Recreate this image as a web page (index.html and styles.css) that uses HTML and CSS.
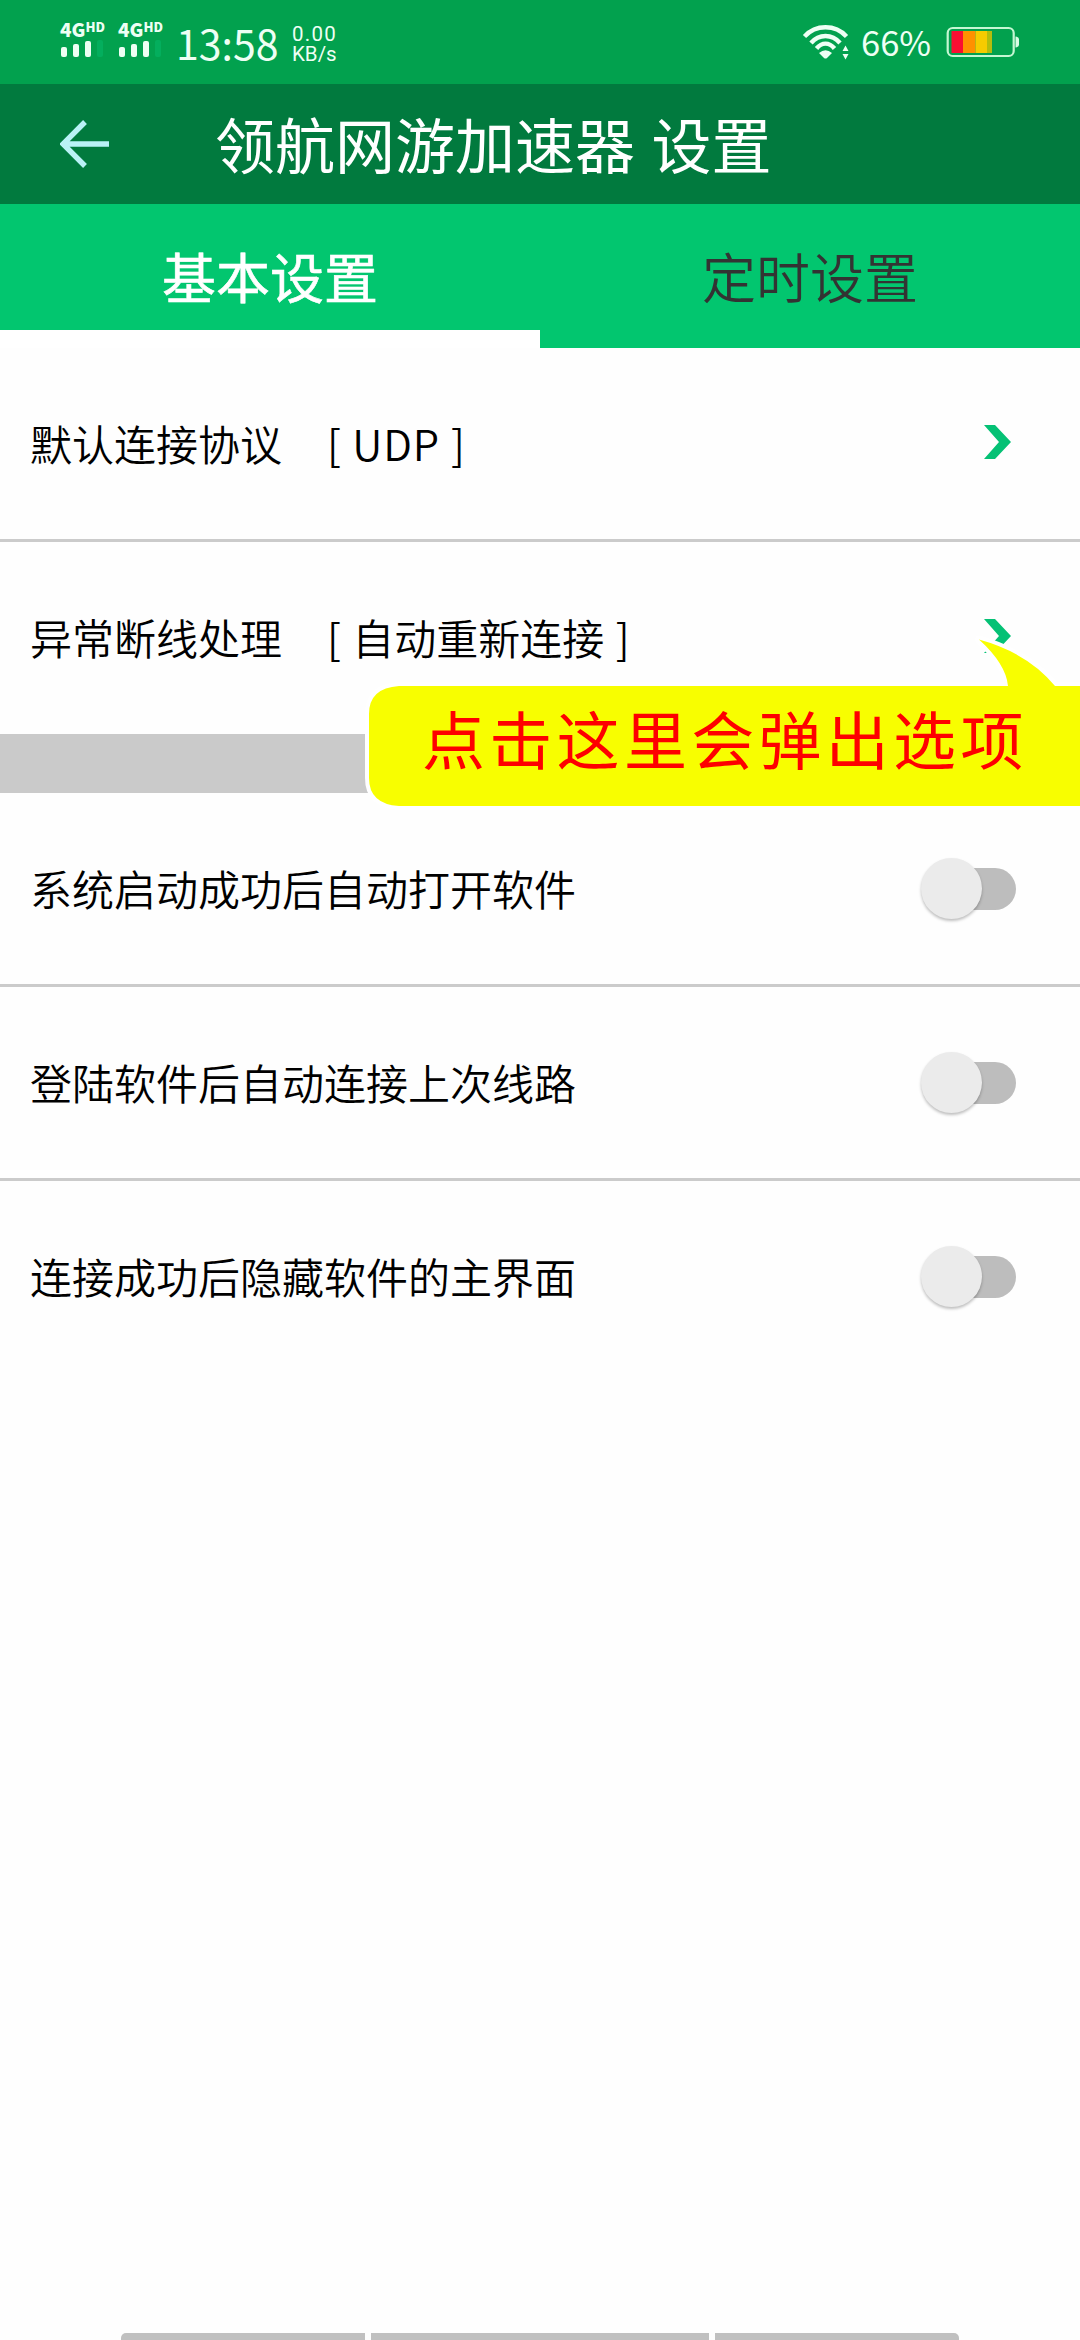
FILE: index.html
```html
<!DOCTYPE html>
<html lang="zh-CN">
<head>
<meta charset="utf-8">
<title>领航网游加速器 设置</title>
<link rel="stylesheet" href="styles.css">
</head>
<body>
<div class="screen">
  <div class="status">
    <div class="sim">
      <div class="net">4G<span class="hd">HD</span></div>
      <div class="bars"><i class="bar b1"></i><i class="bar b2"></i><i class="bar b3"></i><i class="bar b4"></i></div>
    </div>
    <div class="sim">
      <div class="net">4G<span class="hd">HD</span></div>
      <div class="bars"><i class="bar b1"></i><i class="bar b2"></i><i class="bar b3"></i><i class="bar b4"></i></div>
    </div>
    <div class="clock">13:58</div>
    <div class="speed"><span class="rate">0.00</span><span>KB/s</span></div>
    <div class="spacer"></div>
    <svg class="wifi" width="48" height="36" viewBox="0 0 48 36">
      <g fill="none" stroke="#eefff4" stroke-width="4.4">
        <path d="M2.5 12.5Q11 3.3 23.5 3.3T44.5 12.5"/>
        <path d="M9 19Q15 12 23.5 12T38 19"/>
        <path d="M14.5 24.5Q18.5 19.6 23.5 19.6T32.5 24.5"/>
      </g>
      <path d="M17 29Q23.500 23.500 30 29L25 34Q23.500 35 22 34Z" fill="#eefff4"/>
      <path d="M40.500 27L43.500 21.500L46.500 27ZM40.500 30L43.500 35.500L46.500 30Z" fill="#eefff4"/>
    </svg>
    <div class="percent">66%</div>
    <svg class="battery" width="74" height="32" viewBox="0 0 74 32">
      <rect x="1.700" y="2" width="66" height="28" rx="5" fill="none" stroke="#c4f7d2" stroke-width="2.200"/>
      <path d="M69.500 10.500Q73 11 73 13V19Q73 21 69.500 21.500Z" fill="#d8fbe3"/>
      <path d="M5.500 5H17V27H5.500Z" fill="#fa0f32"/>
      <path d="M17 5H29.500V27H17Z" fill="#ff9100"/>
      <path d="M29.500 5H41V27H29.500Z" fill="#f6cb00"/>
      <path d="M41 5H46V27H41Z" fill="#b4bd0c"/>
    </svg>
  </div>

  <div class="header">
    <svg class="back" width="50" height="48" viewBox="0 0 50 48">
      <path d="M25 2L3 24L25 46M3 24H49" fill="none" stroke="#b9f2f6" stroke-width="5.400"/>
    </svg>
    <div class="title">领航网游加速器 设置</div>
  </div>

  <div class="tabs">
    <div class="tab active"><span>基本设置</span></div>
    <div class="tab"><span>定时设置</span></div>
  </div>

  <div class="row">
    <div class="label">默认连接协议</div><div class="value">[ <span class="latin">UDP</span> ]</div>
    <svg class="chevron" width="27" height="34" viewBox="0 0 27 34"><path d="M0 0H11L27 17L11 34H0L15 17Z" fill="#05c175"/></svg>
  </div>
  <div class="row second">
    <div class="label">异常断线处理</div><div class="value">[ 自动重新连接 ]</div>
    <svg class="chevron" width="27" height="34" viewBox="0 0 27 34"><path d="M0 0H11L27 17L11 34H0L15 17Z" fill="#05c175"/></svg>
    <div class="callout">
      <svg class="bubble" width="715" height="180" viewBox="0 0 715 180">
        <path d="M34 51H643Q641 29 614 4.500Q663 18 690 51H730V171H34Q4 169 4 143V79Q4 53 34 51Z" fill="#fff" stroke="#fff" stroke-width="8" stroke-linejoin="round"/>
        <path d="M34 51H643Q641 29 614 4.500Q663 18 690 51H730V171H34Q4 169 4 143V79Q4 53 34 51Z" fill="#f8fe00"/>
      </svg>
      <div class="tip">点击这里会弹出选项</div>
    </div>
  </div>
  <div class="band"></div>
  <div class="row">
    <div class="label">系统启动成功后自动打开软件</div>
    <div class="switch"><div class="knob"></div></div>
  </div>
  <div class="row">
    <div class="label">登陆软件后自动连接上次线路</div>
    <div class="switch"><div class="knob"></div></div>
  </div>
  <div class="row last">
    <div class="label">连接成功后隐藏软件的主界面</div>
    <div class="switch"><div class="knob"></div></div>
  </div>

  <div class="navbar"><i class="seg left"></i><i class="seg mid"></i><i class="seg right"></i></div>
</div>
</body>
</html>
```
FILE: styles.css
```css
* { box-sizing: border-box; }
body {
  margin: 0;
  background: #fefefe;
  font-family: "Noto Sans CJK SC", sans-serif;
}
.screen {
  width: 1080px;
  height: 2340px;
  display: flex;
  flex-direction: column;
  overflow: hidden;
}

/* status bar */
.status {
  height: 84px;
  flex: none;
  background: #02a14e;
  color: #eefff4;
  display: flex;
  align-items: flex-start;
  padding-left: 60px;
  padding-right: 60px;
}
.sim { width: 58px; padding-top: 19px; flex: none; }
.net {
  display: flex;
  align-items: flex-start;
  height: 21px;
  font-size: 19px;
  line-height: 19px;
  font-weight: 900;
}
.hd { font-size: 13px; line-height: 16px; font-weight: 900; }
.bars { display: flex; align-items: flex-end; gap: 6px; height: 17px; padding-left: 1px; }
.bar { width: 6px; border-radius: 2px; background: #eefff4; }
.b1 { height: 10px; }
.b2 { height: 13px; }
.b3 { height: 16px; }
.b4 { height: 17px; background: #04ae5d; }
.clock {
  flex: none;
  width: 116px;
  padding-top: 22px;
  font-size: 41px;
  line-height: 40px;
}
.speed {
  display: flex;
  flex-direction: column;
  font-family: Roboto, sans-serif;
  font-size: 20.500px;
  line-height: 20px;
  padding-top: 24px;
}
.rate { letter-spacing: 1.300px; }
.spacer { flex: 1; }
.wifi { margin-top: 24px; flex: none; }
.percent {
  flex: none;
  width: 96px;
  padding: 21px 0 0 11px;
  font-size: 34.500px;
  line-height: 40px;
}
.battery { margin-top: 26px; flex: none; }

/* title bar */
.header {
  height: 120px;
  flex: none;
  background: #017a3e;
  display: flex;
  align-items: center;
  padding-left: 60px;
}
.back { flex: none; }
.title {
  margin-left: 105px;
  margin-bottom: 2px;
  color: #fff;
  font-size: 60px;
  line-height: 90px;
  word-spacing: 3px;
  white-space: pre;
}

.tabs { height: 144px; flex: none; display: flex; }
.tab {
  flex: 1;
  background: #02c66f;
  color: #333;
  font-size: 54px;
  line-height: 78px;
  font-weight: 350;
  text-align: center;
  padding-top: 33px;
}
.active {
  color: #fff;
  font-weight: 400;
  -webkit-text-stroke: .6px #fff;
  border-bottom: 18px solid #fff;
}

/* settings list */
.row {
  height: 194px;
  flex: none;
  position: relative;
  display: flex;
  align-items: center;
  border-bottom: 3px solid #cbcbcb;
  padding: 0 64px 0 30px;
  font-size: 42px;
  font-weight: 350;
  color: #000;
}
.second { height: 192px; border-bottom: 0; }
.last { border-bottom: 0; height: 191px; }
.label, .value { padding-bottom: 3px; white-space: nowrap; }
.value { margin-left: 45px; word-spacing: 2px; }
.latin { letter-spacing: .8px; }
.chevron { margin-left: auto; margin-right: 5px; margin-bottom: 4px; }
.band { height: 59px; flex: none; background: #cacaca; }

.switch {
  width: 88px;
  height: 42px;
  margin-left: auto;
  border-radius: 21px;
  background: #bdbdbd;
  display: flex;
  align-items: center;
}
.knob {
  width: 61px;
  height: 61px;
  flex: none;
  margin-left: -7px;
  border-radius: 50%;
  background: #ebebeb;
  box-shadow: 0 2px 3px rgba(0, 0, 0, .25);
}

/* hint bubble lying over the list */
.callout {
  position: absolute;
  left: 365px;
  top: 93px;
  width: 715px;
  height: 180px;
  z-index: 2;
}
.bubble { display: block; }
.tip {
  position: absolute;
  left: 57px;
  top: 55px;
  font-size: 63px;
  line-height: 94px;
  letter-spacing: 4.300px;
  font-weight: 400;
  color: #fe0000;
  white-space: nowrap;
}

.navbar {
  margin-top: auto;
  height: 7px;
  display: flex;
  justify-content: center;
  gap: 6px;
}
.seg { background: #c0c0c0; height: 7px; }
.left { width: 244px; border-top-left-radius: 5px; }
.mid { width: 338px; }
.right { width: 244px; border-top-right-radius: 5px; }
```
